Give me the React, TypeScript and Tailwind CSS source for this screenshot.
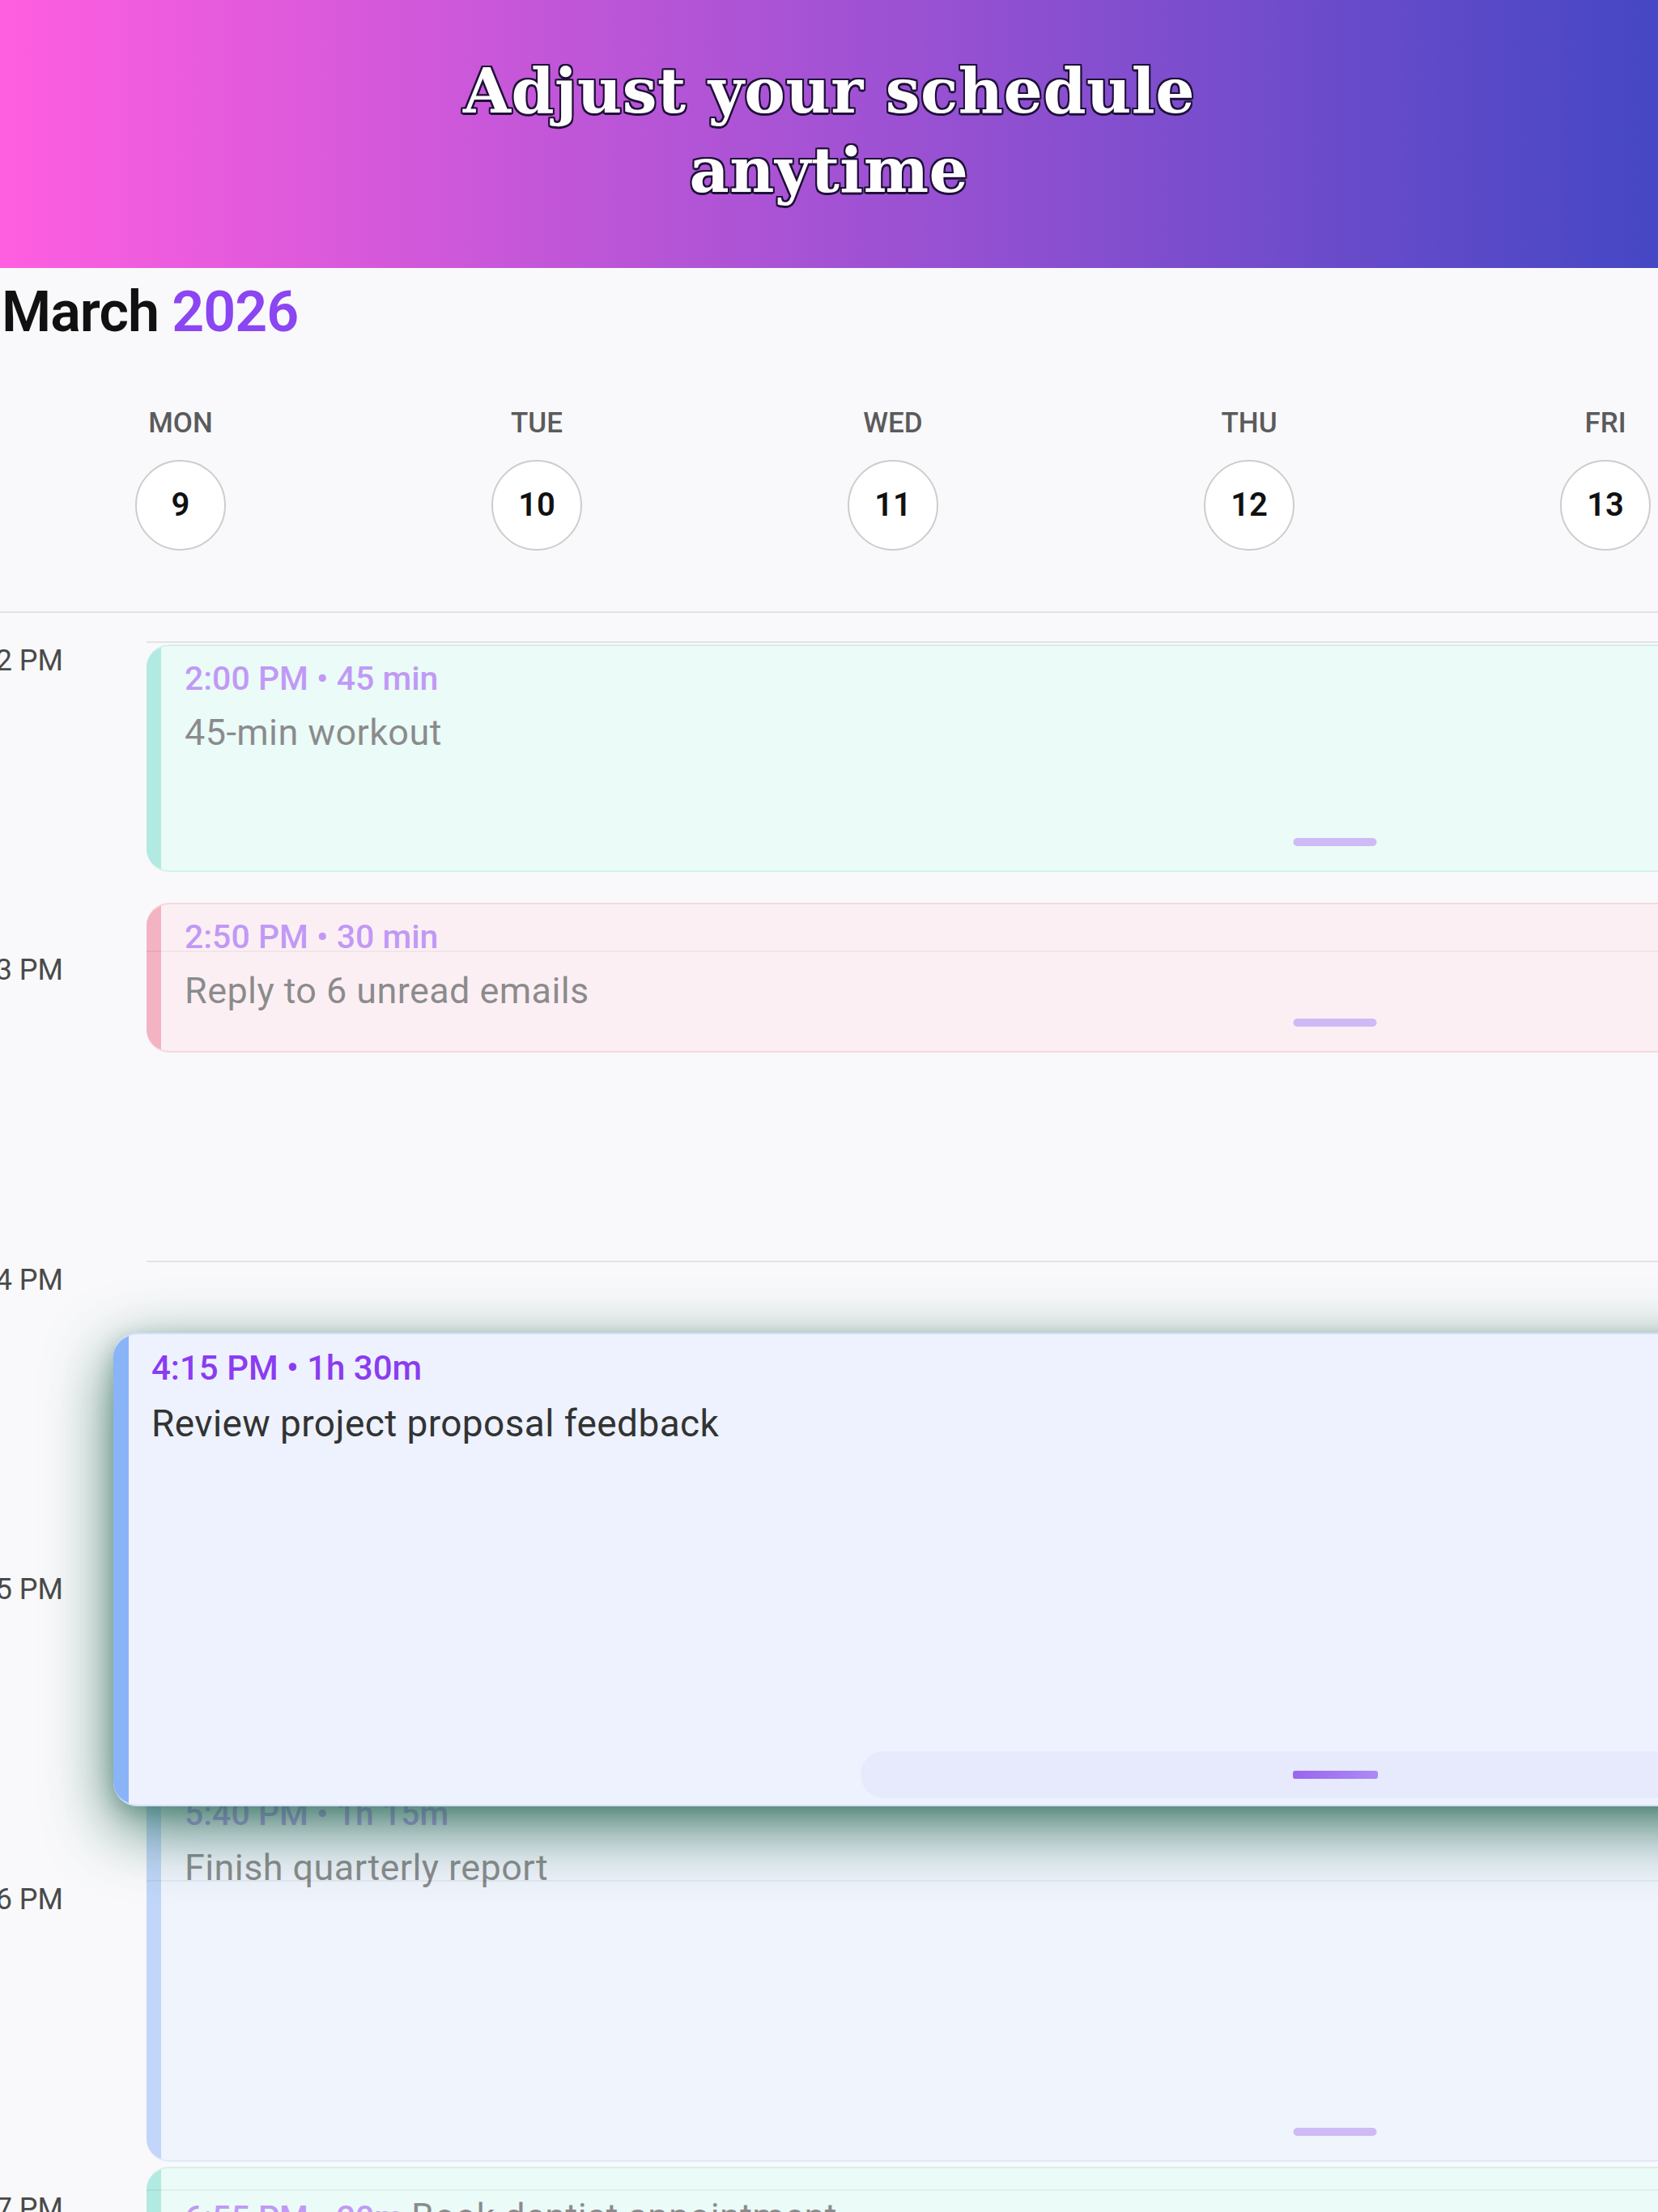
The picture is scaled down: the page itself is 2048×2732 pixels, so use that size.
import React from "react";

const HOUR = 382.4;
const PPM = HOUR / 60;

type Tone = "teal" | "pink" | "blue";

const tones: Record<Tone, { bg: string; border: string; strip: string }> = {
  teal: { bg: "bg-[#dcfdf6]", border: "border-[#b4e8dd]", strip: "bg-[#6ddcc8]" },
  pink: { bg: "bg-[#ffe7ee]", border: "border-[#f3b5c3]", strip: "bg-[#ee6f8a]" },
  blue: { bg: "bg-[#e8f0fe]", border: "border-[#c7d8fb]", strip: "bg-[#8ab4f8]" },
};

type Ev = {
  start: number;
  dur: number;
  time: string;
  title: string;
  tone: Tone;
  compact?: boolean;
};

const events: Ev[] = [
  { start: 0, dur: 45, time: "2:00 PM • 45 min", title: "45-min workout", tone: "teal" },
  { start: 50, dur: 30, time: "2:50 PM • 30 min", title: "Reply to 6 unread emails", tone: "pink" },
  { start: 220, dur: 75, time: "5:40 PM • 1h 15m", title: "Finish quarterly report", tone: "blue" },
  { start: 295, dur: 20, time: "6:55 PM • 20m", title: "Book dentist appointment", tone: "teal", compact: true },
];

const days = [
  { name: "MON", num: "9" },
  { name: "TUE", num: "10" },
  { name: "WED", num: "11" },
  { name: "THU", num: "12" },
  { name: "FRI", num: "13" },
];

const hours = ["2 PM", "3 PM", "4 PM", "5 PM", "6 PM", "7 PM"];

function Card({ ev }: { ev: Ev }) {
  const t = tones[ev.tone];
  return (
    <div
      className={`absolute left-0 flex w-[2938px] overflow-hidden rounded-[28px] border-y-2 border-r-2 opacity-50 ${t.bg} ${t.border}`}
      style={{ top: ev.start * PPM + 4, height: ev.dur * PPM - 6 }}
    >
      <div className={`w-[18px] shrink-0 ${t.strip}`} />
      {ev.compact ? (
        <div className="flex items-baseline gap-[10px] pl-[29px] pt-[34px] whitespace-nowrap">
          <span className="text-[41px] leading-[48px] font-medium text-[#8b3cf0]">{ev.time}</span>
          <span className="text-[45px] leading-[52px] tracking-[0.4px] text-[#1f1f1f]">{ev.title}</span>
        </div>
      ) : (
        <div className="flex flex-col pl-[29px] pt-[16px] whitespace-nowrap">
          <span className="text-[41px] leading-[48px] font-medium text-[#8b3cf0]">{ev.time}</span>
          <span className="mt-[17px] text-[45px] leading-[52px] tracking-[0.4px] text-[#1f1f1f]">{ev.title}</span>
        </div>
      )}
      {!ev.compact && (
        <div className="absolute bottom-[30px] left-1/2 h-[10px] w-[103px] -translate-x-1/2 rounded-full bg-[#a67cf1]" />
      )}
    </div>
  );
}

function DraggedCard() {
  return (
    <div
      className="absolute flex w-[3020px] overflow-hidden rounded-[30px] border-y-2 border-r-2 border-[#d3dffb] bg-[#edf2fe] shadow-[0_26px_80px_rgba(40,105,85,0.85),0_8px_24px_rgba(40,100,80,0.3)]"
      style={{ top: 854, left: -41, height: 585 }}
    >
      <div className="w-[19px] shrink-0 bg-[#8ab4f8]" />
      <div className="flex flex-col pl-[28px] pt-[17px] whitespace-nowrap">
        <span className="text-[42px] leading-[49px] font-medium text-[#8b3cf0]">4:15 PM • 1h 30m</span>
        <span className="mt-[18px] text-[46px] leading-[53px] tracking-[0.4px] text-[#333333]">
          Review project proposal feedback
        </span>
      </div>
      <div className="absolute bottom-[8px] left-1/2 flex h-[58px] w-[1172px] -translate-x-1/2 items-center justify-center rounded-full bg-[#e7e9fd]">
        <div className="h-[10px] w-[105px] rounded-[3px] bg-[linear-gradient(to_right,#9a66ee,#ab8af5)]" />
      </div>
    </div>
  );
}

export default function App() {
  return (
    <div className="h-[2732px] w-[2048px] overflow-hidden bg-[#f9f9fb] font-['Roboto',sans-serif]">
      <div className="flex h-[331px] items-center justify-center bg-[linear-gradient(to_right,#ff5ee0,#a452d4_50%,#4547c4)] pb-[8px]">
        <h1 className="text-center font-['DejaVu_Serif',serif] text-[76px] font-bold leading-[98px] tracking-[0.5px] text-white [text-shadow:-2px_-2px_0_#1e1038,2px_-2px_0_#1e1038,-2px_2px_0_#1e1038,2px_2px_0_#1e1038,0_-2px_0_#1e1038,0_3px_0_#1e1038,-2px_0_0_#1e1038,2px_0_0_#1e1038]">
          Adjust your schedule
          <br />
          anytime
        </h1>
      </div>

      <div className="pl-[2px] pt-[19px] text-[70px] font-semibold leading-[70px] tracking-[-1px] text-[#111111]">
        March <span className="text-[#8b45f2]">2026</span>
      </div>

      <div className="mt-[85px] flex pl-[3px]">
        {days.map((d) => (
          <div key={d.name} className="flex w-[440px] shrink-0 flex-col items-center">
            <div className="text-[35px] font-medium leading-[36px] text-[#5b5b5b]">{d.name}</div>
            <div className="mt-[27px] flex h-[112px] w-[112px] items-center justify-center rounded-full border-2 border-[#cdcdcd] bg-white text-[40px] font-semibold text-[#111111]">
              {d.num}
            </div>
          </div>
        ))}
      </div>

      <div className="mt-[75px] h-[2px] bg-[#e3e3e6]" />

      <div className="mt-[35px] flex">
        <div className="w-[78px] shrink-0">
          {hours.map((h) => (
            <div
              key={h}
              className="flex h-[382.4px] justify-end whitespace-nowrap pt-[3px] text-[36px] leading-[43px] text-[#4a4a4a]"
            >
              <span>{h}</span>
            </div>
          ))}
        </div>
        <div className="relative ml-[103px] flex-1">
          {hours.map((h) => (
            <div key={h} className="h-[382.4px] border-t-2 border-[#e3e3e6]" />
          ))}
          <div className="absolute inset-0">
            {events.map((ev) => (
              <Card key={ev.time} ev={ev} />
            ))}
            <DraggedCard />
          </div>
        </div>
      </div>
    </div>
  );
}
